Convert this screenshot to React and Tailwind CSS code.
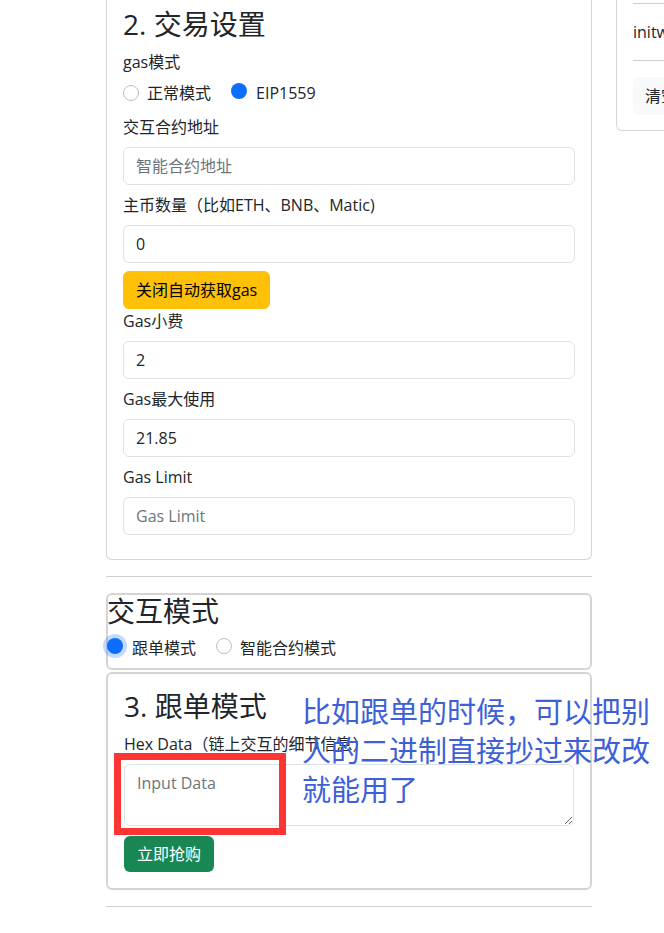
const font = { fontFamily: '"Open Sans", "Noto Sans CJK SC", sans-serif' };

function Radio({ checked, focus }) {
  if (checked) {
    return (
      <span
        className={`inline-block w-[16px] h-[16px] rounded-full bg-[#0d6efd] shrink-0 ${
          focus ? 'shadow-[0_0_0_4px_rgba(13,110,253,0.25)]' : ''
        }`}
      />
    );
  }
  return <span className="inline-block w-[16px] h-[16px] rounded-full border border-[#bfbfbf] bg-white shrink-0" />;
}

function Label({ children, className = '' }) {
  return <div className={`text-[16px] leading-[24px] text-[#212529] ${className}`}>{children}</div>;
}

function Input({ placeholder, value }) {
  return (
    <input
      className="block w-full h-[38px] px-[12px] border border-[#dee2e6] rounded-[6px] text-[16px] text-[#212529] placeholder:text-[#6c757d] outline-none bg-white"
      placeholder={placeholder}
      defaultValue={value}
    />
  );
}

export default function App() {
  return (
    <div className="relative w-[664px] h-[933px] overflow-hidden bg-white text-[#212529]" style={font}>
      <div className="flex items-start pl-[106px] gap-[24px]">
        {/* left column */}
        <div className="w-[486px] shrink-0">
          {/* 2. 交易设置 */}
          <div className="border border-t-0 border-[#d6d6d6] rounded-b-[6px] px-[16px] pb-[16px]">
            <h2 className="text-[28px] leading-[32px] pt-[8px] mb-[10px]">2. 交易设置</h2>
            <Label className="mb-[7px]">gas模式</Label>
            <div className="h-[24px] flex items-center mb-[10px]">
              <Radio />
              <span className="ml-[8px] text-[16px]">正常模式</span>
              <span className="ml-[20px]">
                <Radio checked />
              </span>
              <span className="ml-[9px] text-[16px]">EIP1559</span>
            </div>
            <Label className="mb-[8px]">交互合约地址</Label>
            <div className="mb-[8px]">
              <Input placeholder="智能合约地址" />
            </div>
            <Label className="mb-[8px]">主币数量（比如ETH、BNB、Matic)</Label>
            <div className="mb-[8px]">
              <Input value="0" />
            </div>
            <button className="h-[38px] px-[12px] bg-[#ffc107] border border-[#ffc107] rounded-[6px] text-[16px] text-black">
              关闭自动获取gas
            </button>
            <Label className="mb-[8px]">Gas小费</Label>
            <div className="mb-[8px]">
              <Input value="2" />
            </div>
            <Label className="mb-[8px]">Gas最大使用</Label>
            <div className="mb-[8px]">
              <Input value="21.85" />
            </div>
            <Label className="mb-[8px]">Gas Limit</Label>
            <div className="mb-[8px]">
              <Input placeholder="Gas Limit" />
            </div>
          </div>

          <hr className="mt-[16px] mb-[16px] border-0 border-t border-[#cfcfcf]" />

          {/* 交互模式 */}
          <div className="border-2 border-[#d4d4d4] rounded-[6px] pb-[8px]">
            <h3 className="text-[28px] leading-[32px] -ml-[1px] mb-[9px]">交互模式</h3>
            <div className="h-[24px] flex items-center">
              <span className="-ml-[1px]">
                <Radio checked focus />
              </span>
              <span className="ml-[9px] text-[16px]">跟单模式</span>
              <span className="ml-[20px]">
                <Radio />
              </span>
              <span className="ml-[8px] text-[16px]">智能合约模式</span>
            </div>
          </div>

          {/* 3. 跟单模式 */}
          <div className="mt-[2px] border-2 border-[#d4d4d4] rounded-[6px] p-[16px]">
            <h3 className="text-[28px] leading-[32px] mb-[10px]">3. 跟单模式</h3>
            <Label className="mb-[8px]">Hex Data（链上交互的细节信息）</Label>
            <textarea
              className="block w-full h-[62px] px-[12px] py-[6px] border border-[#dee2e6] rounded-[6px] text-[16px] leading-[24px] placeholder:text-[#6c757d] outline-none"
              placeholder="Input Data"
            />
            <button className="mt-[10px] h-[36px] px-[13px] bg-[#198754] rounded-[6px] text-[16px] text-white">
              立即抢购
            </button>
          </div>

          <hr className="mt-[16px] border-0 border-t border-[#cfcfcf]" />
        </div>

        {/* right column */}
        <div className="w-[300px] shrink-0 border border-t-0 border-[#d6d6d6] rounded-b-[6px] pl-[16px] pb-[15px]">
          <hr className="mt-[3px] border-0 border-t border-[#cfcfcf]" />
          <div className="py-[16px] text-[16px] leading-[24px] whitespace-nowrap">initwallet</div>
          <hr className="border-0 border-t border-[#cfcfcf]" />
          <button className="mt-[16px] h-[38px] px-[12px] bg-[#f8f9fa] rounded-[6px] text-[16px] text-[#212529]">
            清空日志
          </button>
        </div>
      </div>

      {/* annotations */}
      <div className="absolute left-[114px] top-[753px] w-[172px] h-[82px] border-[7px] border-[#fc3434]" />
      <div className="absolute left-[302px] top-[692px] text-[29px] leading-[39px] text-[#3d5fd8] whitespace-nowrap">
        <div>比如跟单的时候，可以把别</div>
        <div>人的二进制直接抄过来改改</div>
        <div>就能用了</div>
      </div>
    </div>
  );
}
